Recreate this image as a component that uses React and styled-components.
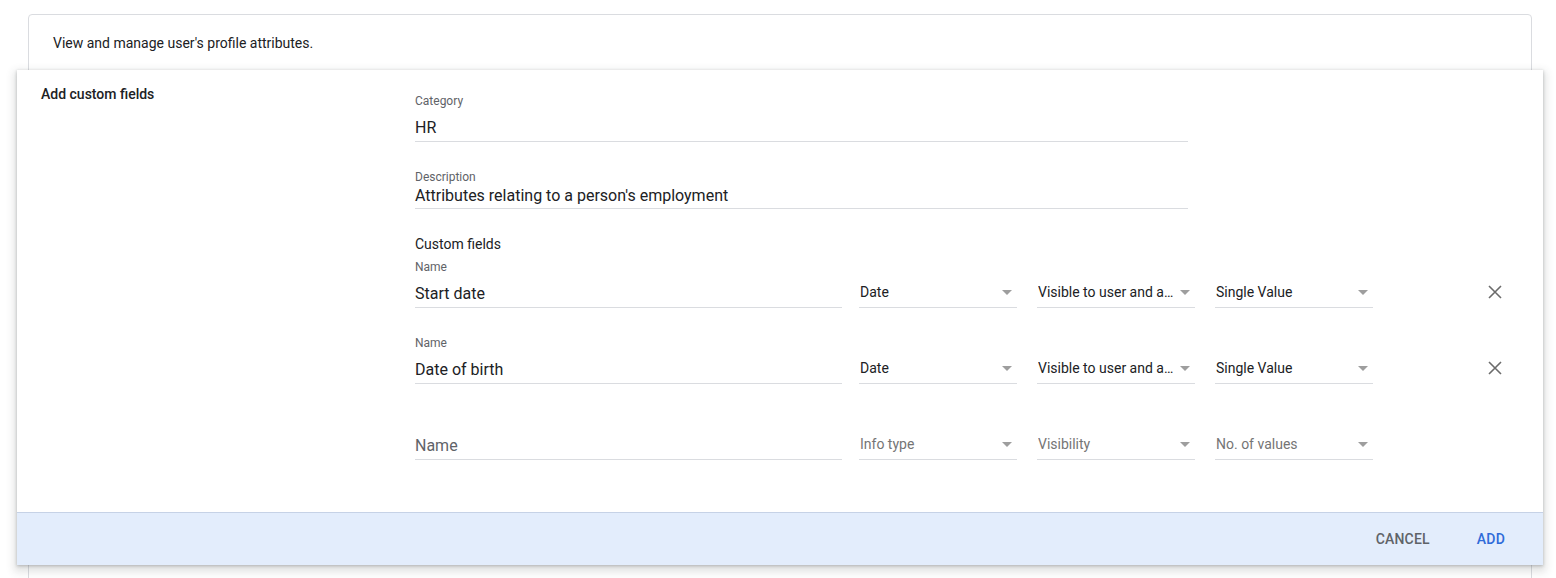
import React from "react";
import styled, { createGlobalStyle } from "styled-components";

const Global = createGlobalStyle`
  html, body { margin: 0; padding: 0; background: #fff; }
  body { font-family: Roboto, "Liberation Sans", Arial, sans-serif; color: #202124; }
  * { box-sizing: border-box; }
`;

const Page = styled.div`
  padding: 14px 24px 0 28px;
  height: 578px;
  overflow: hidden;
`;

const Card = styled.section`
  border: 1px solid #dadce0;
  border-radius: 4px;
  background: #fff;
  padding-bottom: 60px;
`;

const CardIntro = styled.div`
  padding: 18px 24px 17px;
  font-size: 14px;
  line-height: 20px;
  color: #202124;
`;

const Dialog = styled.div`
  margin: 0 -12px 0 -12px;
  background: #fff;
  box-shadow: 0 1px 3px rgba(60, 64, 67, 0.3), 0 4px 8px 3px rgba(60, 64, 67, 0.15);
`;

const DialogBody = styled.div`
  display: grid;
  grid-template-columns: 374px 1fr;
  padding: 14px 24px 52px;
`;

const Title = styled.h2`
  margin: 0;
  font-size: 14px;
  line-height: 20px;
  font-weight: 500;
  color: #202124;
`;

const Form = styled.div`
  display: flex;
  flex-direction: column;
`;

const Field = styled.label`
  display: flex;
  flex-direction: column;
  width: ${(p) => p.$width}px;
  margin-top: ${(p) => p.$top || 0}px;
`;

const FieldLabel = styled.span`
  font-size: 12px;
  line-height: 14px;
  color: #5f6368;
  visibility: ${(p) => (p.$hidden ? "hidden" : "visible")};
`;

const FieldValue = styled.div`
  margin-top: ${(p) => p.$gap}px;
  font-size: 16px;
  line-height: 22px;
  padding-bottom: ${(p) => (p.$gap < 2 ? 1 : 2)}px;
  border-bottom: 1px solid #dadce0;
  color: ${(p) => (p.$placeholder ? "#5f6368" : "#202124")};
  white-space: nowrap;
`;

const SectionHeading = styled.div`
  margin-top: 25px;
  font-size: 14px;
  line-height: 20px;
  color: #202124;
`;

const Row = styled.div`
  display: flex;
  align-items: flex-end;
  margin-top: ${(p) => p.$top}px;
`;

const Select = styled.div`
  display: flex;
  align-items: center;
  width: 158px;
  margin-left: ${(p) => p.$lead}px;
  padding: 1px 5px 5px 1px;
  line-height: 20px;
  font-size: 14px;
  border-bottom: 1px solid #dadce0;
  color: ${(p) => (p.$placeholder ? "#757575" : "#202124")};
`;

const SelectText = styled.span`
  flex: 1;
  min-width: 0;
  overflow: hidden;
  white-space: nowrap;
  text-overflow: ellipsis;
  padding-right: 4px;
`;

const Remove = styled.button`
  width: 28px;
  height: 28px;
  margin-left: 108px;
  margin-bottom: 2px;
  border: 0;
  background: transparent;
  padding: 0;
  display: flex;
  align-items: center;
  justify-content: center;
  cursor: pointer;
`;

const Footer = styled.div`
  display: flex;
  justify-content: flex-end;
  align-items: center;
  gap: 15px;
  height: 53px;
  padding-right: 22px;
  background: #e3edfc;
  border-top: 1px solid #c6d2e6;
`;

const FooterButton = styled.button`
  height: 36px;
  padding: 0 16px;
  border: 0;
  background: transparent;
  font-family: Roboto, "Liberation Sans", Arial, sans-serif;
  font-size: 14px;
  font-weight: 500;
  letter-spacing: 0.2px;
  text-transform: uppercase;
  color: ${(p) => (p.$primary ? "#2f6bd9" : "#5f6368")};
  cursor: pointer;
`;

const Arrow = () => (
  <svg width="10" height="5" viewBox="0 0 10 5">
    <path d="M0 0 L10 0 L5 5 Z" fill="#9e9e9e" />
  </svg>
);

const CloseIcon = () => (
  <svg width="14" height="14" viewBox="0 0 14 14">
    <path d="M1 1 L13 13 M13 1 L1 13" stroke="#6b6b6b" strokeWidth="1.6" fill="none" />
  </svg>
);

const Dropdown = ({ value, placeholder, lead }) => (
  <Select $placeholder={!value} $lead={lead}>
    <SelectText>{value || placeholder}</SelectText>
    <Arrow />
  </Select>
);

const fields = [
  { name: "Start date", type: "Date", vis: "Visible to user and admin", count: "Single Value" },
  { name: "Date of birth", type: "Date", vis: "Visible to user and admin", count: "Single Value" },
  { name: "", type: "", vis: "", count: "" },
];

export default function App() {
  return (
    <>
      <Global />
      <Page>
        <Card>
          <CardIntro>View and manage user's profile attributes.</CardIntro>
          <Dialog>
            <DialogBody>
              <Title>Add custom fields</Title>
              <Form>
                <Field $width={773} $top={10}>
                  <FieldLabel>Category</FieldLabel>
                  <FieldValue $gap={9}>HR</FieldValue>
                </Field>
                <Field $width={773} $top={28}>
                  <FieldLabel>Description</FieldLabel>
                  <FieldValue $gap={1}>Attributes relating to a person's employment</FieldValue>
                </Field>
                <SectionHeading>Custom fields</SectionHeading>
                {fields.map((f, i) => {
                  const empty = !f.name;
                  return (
                    <Row key={i} $top={i === 0 ? 6 : 28}>
                      <Field $width={427}>
                        <FieldLabel $hidden={empty}>Name</FieldLabel>
                        <FieldValue $gap={9} $placeholder={empty}>
                          {f.name || "Name"}
                        </FieldValue>
                      </Field>
                      <Dropdown lead={17} value={f.type} placeholder="Info type" />
                      <Dropdown lead={20} value={f.vis} placeholder="Visibility" />
                      <Dropdown lead={20} value={f.count} placeholder="No. of values" />
                      {!empty && (
                        <Remove aria-label="Remove field">
                          <CloseIcon />
                        </Remove>
                      )}
                    </Row>
                  );
                })}
              </Form>
            </DialogBody>
            <Footer>
              <FooterButton>Cancel</FooterButton>
              <FooterButton $primary>Add</FooterButton>
            </Footer>
          </Dialog>
        </Card>
      </Page>
    </>
  );
}
